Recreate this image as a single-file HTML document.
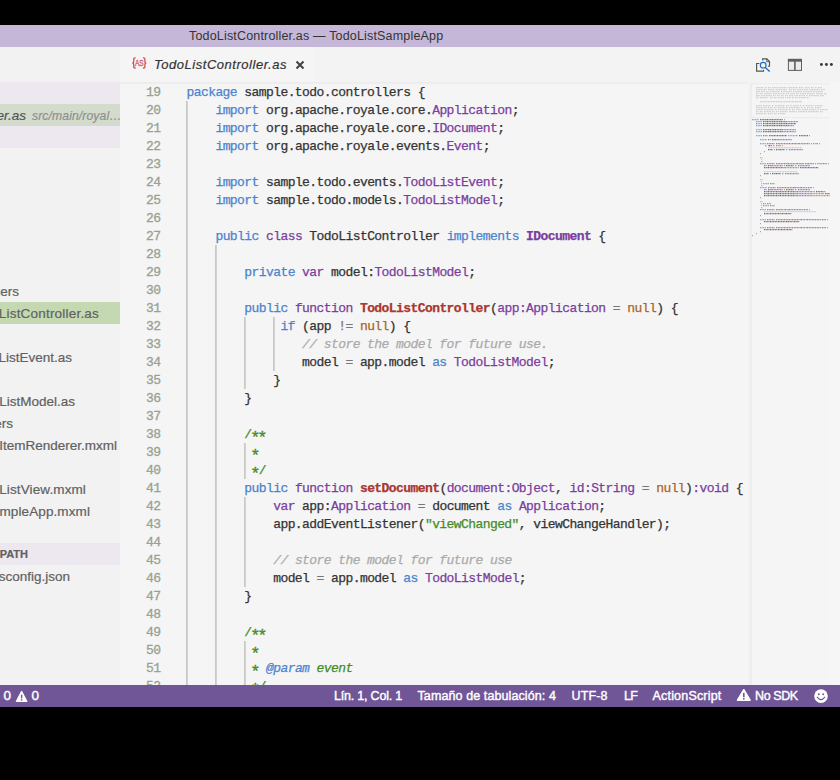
<!DOCTYPE html>
<html>
<head>
<meta charset="utf-8">
<title>TodoListController.as — TodoListSampleApp</title>
<style>
html,body{margin:0;padding:0;}
body{width:840px;height:780px;background:#000;position:relative;overflow:hidden;font-family:"Liberation Sans",sans-serif;}
#win{position:absolute;left:0;top:25px;width:840px;height:682px;background:#f5f5f5;overflow:hidden;}
#title{position:absolute;left:0;top:0;width:840px;height:22px;background:#c4b7d7;}
#title span{position:absolute;left:189px;top:0;line-height:22px;font-size:12.5px;color:#333;white-space:nowrap;letter-spacing:0.175px;}
#side{position:absolute;left:0;top:22px;width:120px;height:638px;background:#f2f2f2;overflow:hidden;}
.sh{position:absolute;left:0;width:120px;height:22px;background:#ede8ef;}
.row{position:absolute;left:0;width:120px;height:22px;}
.t{position:absolute;top:1px;line-height:22px;font-size:13.5px;color:#616161;white-space:nowrap;-webkit-text-stroke:0.2px;}
#tabs{position:absolute;left:120px;top:22px;width:720px;height:35px;background:#f3f3f3;}
#tab{position:absolute;left:0;top:0;width:194px;height:35px;background:#f5f5f5;}
#tab .nm{position:absolute;left:34px;top:0;line-height:35px;font-size:13px;font-style:italic;color:#333;white-space:nowrap;letter-spacing:0.53px;-webkit-text-stroke:0.2px;}
#ed{position:absolute;left:120px;top:57px;width:720px;height:603px;background:#f5f5f5;overflow:hidden;}
.ln{position:absolute;left:0;width:40.5px;text-align:right;font-family:"Liberation Mono",monospace;font-size:13px;letter-spacing:-0.577px;line-height:18px;height:18px;color:#98a194;-webkit-text-stroke:0.3px #98a194;}
.cl{position:absolute;left:66.5px;font-family:"Liberation Mono",monospace;font-size:13px;line-height:18px;height:18px;color:#333;white-space:pre;letter-spacing:-0.577px;-webkit-text-stroke:0.25px;}
.k{color:#4b83cd;}
.s{color:#7a3e9d;}
.ty{color:#7a3e9d;}
.tb{color:#7a3e9d;font-weight:bold;}
.fn{color:#aa3731;font-weight:bold;}
.c{color:#ab6526;}
.o{color:#777;}
.cm{color:#aaa;font-style:italic;}
.dc{color:#448c27;}
.dci{color:#448c27;font-style:italic;}
.dk{color:#4b83cd;font-style:italic;}
.st{color:#448c27;}
.a{display:inline-block;font-style:normal;transform:translate(-0.6px,3.6px) scale(1.3);}
.g{position:absolute;width:2px;background:linear-gradient(90deg,#c9c9c9 0,#c9c9c9 1px,#d2d2d2 1px,#d2d2d2 2px);}
#status{position:absolute;left:0;top:660px;width:840px;height:22px;background:#705697;color:#fff;font-size:12.5px;-webkit-text-stroke:0.4px #fff;}
#status span{position:absolute;top:0;line-height:22px;white-space:nowrap;}
</style>
</head>
<body>
<div id="win">
  <div id="title"><span>TodoListController.as — TodoListSampleApp</span></div>

  <div id="side">
    <div class="sh" style="top:35px"></div>
    <div class="row" style="top:57px;background:#d3dbcd">
      <span class="t" style="right:94px;font-style:italic;color:#555">er.as</span>
      <span class="t" style="left:32px;font-style:italic;font-size:12.2px;letter-spacing:0.1px;color:#8f8f8f">src/main/royal…</span>
    </div>
    <div class="sh" style="top:79px"></div>
    <div class="row" style="top:233px"><span class="t" style="right:101px">llers</span></div>
    <div class="row" style="top:255px;background:#c4d9b1"><span class="t" style="right:21px;letter-spacing:0.2px">ListController.as</span></div>
    <div class="row" style="top:299px"><span class="t" style="right:48px">ListEvent.as</span></div>
    <div class="row" style="top:343px"><span class="t" style="right:45px">ListModel.as</span></div>
    <div class="row" style="top:365px"><span class="t" style="right:107px">ers</span></div>
    <div class="row" style="top:387px"><span class="t" style="right:3px">ItemRenderer.mxml</span></div>
    <div class="row" style="top:431px"><span class="t" style="right:34px;letter-spacing:0.12px">ListView.mxml</span></div>
    <div class="row" style="top:453px"><span class="t" style="right:30px;letter-spacing:0.1px">ampleApp.mxml</span></div>
    <div class="sh" style="top:496px"><span class="t" style="right:92px;top:0;font-size:11px;font-weight:bold">PATH</span></div>
    <div class="row" style="top:518px"><span class="t" style="right:50px">sconfig.json</span></div>
  </div>

  <div id="tabs">
    <div id="tab">
      <svg style="position:absolute;left:10px;top:8px" width="18" height="16" viewBox="0 0 18 16">
        <path d="M5.7 2.9L4.8 2.9Q3.7 2.9 3.7 4L3.7 6.7Q3.7 7.95 2.3 7.95Q3.7 7.95 3.7 9.2L3.7 11.9Q3.7 13 4.8 13L5.7 13" fill="none" stroke="#d4545a" stroke-width="1.35"/>
        <path d="M12.9 2.9L13.8 2.9Q14.9 2.9 14.9 4L14.9 6.7Q14.9 7.95 16.3 7.95Q14.9 7.95 14.9 9.2L14.9 11.9Q14.9 13 13.8 13L12.9 13" fill="none" stroke="#d4545a" stroke-width="1.35"/>
        <text x="4.9" y="10.8" font-family="Liberation Sans" font-size="8.4" fill="#d4545a" stroke="#d4545a" stroke-width="0.3" textLength="8.8" lengthAdjust="spacingAndGlyphs">AS</text>
      </svg>
      <span class="nm">TodoListController.as</span>
      <svg style="position:absolute;left:174.5px;top:13px" width="10" height="10" viewBox="0 0 10 10"><path d="M1.5 1.5L8.5 8.5M8.5 1.5L1.5 8.5" stroke="#424242" stroke-width="2"/></svg>
    </div>
  </div>

  <!--icons-->
    <svg style="position:absolute;left:750px;top:22px" width="90" height="35" viewBox="750 47 90 35">
      <g fill="none" stroke="#555" stroke-width="1.15">
        <path d="M762.7 60.4L762.7 58.9L766.9 58.9L769.5 61.5L769.5 66.2L767.9 66.2"/>
        <path d="M766.7 58.9L766.7 61.7L769.5 61.7" stroke-width="0.9"/>
        <path d="M759.4 63.5L756.6 63.5L756.6 71.1L763.5 71.1L763.5 69.8"/>
      </g>
      <circle cx="763.2" cy="65.2" r="2.85" fill="none" stroke="#1a6dc0" stroke-width="1.15"/>
      <path d="M765.3 67.4L769.7 71.4" stroke="#1a6dc0" stroke-width="1.35" fill="none"/>
      <rect x="788.4" y="59.4" width="13.1" height="11" fill="#ececec" stroke="#606060" stroke-width="1"/>
      <rect x="787.9" y="58.9" width="14.1" height="2.8" fill="#606060"/>
      <rect x="794.1" y="59" width="1.6" height="11.5" fill="#606060"/>
      <circle cx="821.4" cy="64.5" r="1.45" fill="#3a3a3a"/>
      <circle cx="826.4" cy="64.5" r="1.45" fill="#3a3a3a"/>
      <circle cx="831.4" cy="64.5" r="1.45" fill="#3a3a3a"/>
    </svg>
  <div id="ed">
    <div style="position:absolute;left:0;top:0;width:632px;height:3px;background:linear-gradient(#eaeaea,#f5f5f5)"></div>
    <div style="position:absolute;left:628px;top:0;width:4px;height:603px;background:linear-gradient(90deg,#f5f5f5,#ebebeb)"></div>
    <div style="position:absolute;left:710px;top:0;width:10px;height:603px;background:#f6f6f6"></div>
    <svg style="position:absolute;left:632px;top:1px" width="88" height="603" viewBox="0 0 88 603"><g fill="none" stroke-width="1.1" stroke-dasharray="1.1 0.5"><path d="M0 0.6h78M0 34.6h78" stroke="#aaaaaa" opacity="0.16"/><path d="M4 4.6h8M13 4.6h2M16 4.6h3M20 4.6h6M27 4.6h8M36 4.6h10M47 4.6h5M53 4.6h5M59 4.6h3M63 4.6h2M66 4.6h4M4 6.6h11M16 6.6h7M24 6.6h11M37 6.6h3M41 6.6h3M45 6.6h6M52 6.6h4M57 6.6h11M69 6.6h4M4 8.6h4M9 8.6h4M14 8.6h3M18 8.6h10M29 8.6h11M41 8.6h9M51 8.6h9M61 8.6h10M4 10.6h3M8 10.6h3M12 10.6h8M21 10.6h4M26 10.6h4M31 10.6h2M34 10.6h3M38 10.6h5M44 10.6h3M48 10.6h6M55 10.6h8M64 10.6h7M72 10.6h3M4 12.6h4M9 12.6h11M21 12.6h3M25 12.6h3M29 12.6h3M33 12.6h3M37 12.6h4M42 12.6h4M47 12.6h6M54 12.6h2M57 12.6h10M68 12.6h4M4 14.6h3M8 14.6h8M18 14.6h3M22 14.6h3M26 14.6h6M33 14.6h1M35 14.6h4M40 14.6h2M43 14.6h3M47 14.6h7M55 14.6h2M8 18.6h42M4 22.6h6M11 22.6h8M20 22.6h2M23 22.6h10M34 22.6h3M38 22.6h2M41 22.6h6M48 22.6h2M51 22.6h2M54 22.6h8M63 22.6h8M4 24.6h11M16 24.6h5M22 24.6h3M26 24.6h7M34 24.6h2M37 24.6h11M49 24.6h2M52 24.6h2M55 24.6h3M59 24.6h3M63 24.6h6M4 26.6h7M12 26.6h10M23 26.6h2M26 26.6h10M37 26.6h2M40 26.6h3M44 26.6h5M50 26.6h6M57 26.6h7M65 26.6h2M68 26.6h8M4 28.6h3M8 28.6h3M12 28.6h7M20 28.6h3M24 28.6h3M28 28.6h8M37 28.6h8M46 28.6h9M56 28.6h11M68 28.6h3M4 30.6h11M16 30.6h5M22 30.6h3M26 30.6h8M16 64.6h34M12 88.6h33M12 128.6h52" stroke="#aaaaaa" opacity="0.55"/><path d="M0 36.6h7M4 38.6h6M4 40.6h6M4 42.6h6M4 46.6h6M4 48.6h6M4 52.6h6M36 52.6h10M8 56.6h7M8 60.6h6M13 62.6h2M34 66.6h2M8 80.6h6M43 82.6h2M30 90.6h2M11 100.6h6M8 104.6h7M43 106.6h2M11 122.6h6M8 126.6h6M8 136.6h6M8 144.6h6" stroke="#4b83cd" opacity="0.68"/><path d="M8 36.6h6M15 36.6h4M20 36.6h11M11 38.6h3M15 38.6h6M22 38.6h6M29 38.6h4M11 40.6h3M15 40.6h6M22 40.6h6M29 40.6h4M34 40.6h9M11 42.6h3M15 42.6h6M22 42.6h6M29 42.6h6M11 46.6h6M18 46.6h4M23 46.6h6M11 48.6h6M18 48.6h4M23 48.6h6M17 52.6h18M47 52.6h9M20 56.6h5M17 62.6h3M16 66.6h5M24 66.6h3M28 66.6h5M16 82.6h3M34 82.6h8M12 84.6h3M16 84.6h16M48 84.6h17M12 90.6h5M20 90.6h3M24 90.6h5M16 106.6h3M34 106.6h8M12 108.6h3M16 108.6h11M28 108.6h16M64 108.6h8M12 110.6h3M16 110.6h11M28 110.6h16M73 110.6h5M12 112.6h3M16 112.6h11M28 112.6h16M12 130.6h5M18 130.6h11M30 130.6h3M34 130.6h4M12 138.6h5M18 138.6h17M36 138.6h5M42 138.6h4M12 146.6h5M18 146.6h10M29 146.6h5M35 146.6h4" stroke="#333333" opacity="0.68"/><path d="M14 36.6h1M19 36.6h1M32 36.6h1M14 38.6h1M21 38.6h1M28 38.6h1M33 38.6h1M45 38.6h1M14 40.6h1M21 40.6h1M28 40.6h1M33 40.6h1M43 40.6h1M14 42.6h1M21 42.6h1M28 42.6h1M35 42.6h1M41 42.6h1M17 46.6h1M22 46.6h1M29 46.6h1M43 46.6h1M17 48.6h1M22 48.6h1M29 48.6h1M43 48.6h1M57 52.6h1M25 56.6h1M39 56.6h1M42 60.6h1M46 60.6h1M65 60.6h1M67 60.6h1M16 62.6h1M28 62.6h1M30 62.6h1M27 66.6h1M50 66.6h1M12 68.6h1M8 70.6h1M35 80.6h1M44 80.6h1M51 80.6h1M55 80.6h1M69 80.6h2M76 80.6h1M19 82.6h1M57 82.6h1M15 84.6h1M32 84.6h1M46 84.6h1M65 84.6h2M23 90.6h1M46 90.6h1M8 92.6h1M42 104.6h1M48 104.6h1M54 104.6h2M61 104.6h1M19 106.6h1M57 106.6h1M15 108.6h1M27 108.6h1M44 108.6h1M58 108.6h1M62 108.6h1M72 108.6h2M15 110.6h1M27 110.6h1M44 110.6h1M58 110.6h1M71 110.6h1M15 112.6h1M27 112.6h1M44 112.6h1M58 112.6h1M8 114.6h1M32 126.6h1M36 126.6h1M50 126.6h2M57 126.6h1M17 130.6h1M29 130.6h1M33 130.6h1M38 130.6h2M8 132.6h1M48 136.6h1M54 136.6h1M68 136.6h2M75 136.6h1M17 138.6h1M35 138.6h1M41 138.6h1M46 138.6h2M8 140.6h1M48 144.6h1M54 144.6h1M68 144.6h2M75 144.6h1M17 146.6h1M28 146.6h1M34 146.6h1M39 146.6h2M8 148.6h1M4 150.6h1M0 152.6h1" stroke="#333333" opacity="0.4"/><path d="M34 38.6h11M36 42.6h5M30 46.6h13M30 48.6h13M11 52.6h5M16 56.6h3M26 56.6h13M15 60.6h8M43 60.6h3M47 60.6h11M37 66.6h13M15 80.6h8M36 80.6h8M45 80.6h6M53 80.6h2M56 80.6h6M71 80.6h4M12 82.6h3M20 82.6h11M46 82.6h11M33 90.6h13M16 104.6h8M43 104.6h5M49 104.6h5M56 104.6h4M12 106.6h3M20 106.6h11M46 106.6h11M45 108.6h13M45 110.6h13M45 112.6h13M15 126.6h8M33 126.6h3M37 126.6h13M52 126.6h4M15 136.6h8M49 136.6h5M55 136.6h13M70 136.6h4M15 144.6h8M49 144.6h5M55 144.6h13M70 144.6h4" stroke="#7a3e9d" opacity="0.68"/><path d="M24 60.6h18M24 80.6h11M25 104.6h17M24 126.6h8M24 136.6h24M24 144.6h24" stroke="#aa3731" opacity="0.68"/><path d="M59 60.6h1M21 62.6h2M22 66.6h1M63 80.6h1M32 82.6h1M18 90.6h1M32 106.6h1" stroke="#777777" opacity="0.68"/><path d="M61 60.6h4M24 62.6h4M65 80.6h4M59 108.6h3M59 110.6h12M59 112.6h19" stroke="#ab6526" opacity="0.68"/><path d="M8 74.6h3M9 76.6h1M9 78.6h2M8 96.6h3M9 98.6h1M9 100.6h1M9 102.6h2M8 118.6h3M9 120.6h1M9 122.6h1M9 124.6h2" stroke="#448c27" opacity="0.4"/><path d="M33 84.6h13M18 100.6h5M11 120.6h3M15 120.6h4M18 122.6h5" stroke="#448c27" opacity="0.68"/></g></svg>
    <div class="ln" style="top:2px">19</div>
    <div class="cl" style="top:2px"><span class="k">package</span> sample.todo.controllers {</div>
    <div class="ln" style="top:20px">20</div>
    <div class="cl" style="top:20px">    <span class="k">import</span> org.apache.royale.core.<span class="ty">Application</span>;</div>
    <div class="ln" style="top:38px">21</div>
    <div class="cl" style="top:38px">    <span class="k">import</span> org.apache.royale.core.<span class="ty">IDocument</span>;</div>
    <div class="ln" style="top:56px">22</div>
    <div class="cl" style="top:56px">    <span class="k">import</span> org.apache.royale.events.<span class="ty">Event</span>;</div>
    <div class="ln" style="top:74px">23</div>
    <div class="ln" style="top:92px">24</div>
    <div class="cl" style="top:92px">    <span class="k">import</span> sample.todo.events.<span class="ty">TodoListEvent</span>;</div>
    <div class="ln" style="top:110px">25</div>
    <div class="cl" style="top:110px">    <span class="k">import</span> sample.todo.models.<span class="ty">TodoListModel</span>;</div>
    <div class="ln" style="top:128px">26</div>
    <div class="ln" style="top:146px">27</div>
    <div class="cl" style="top:146px">    <span class="k">public</span> <span class="s">class</span> TodoListController <span class="k">implements</span> <span class="tb">IDocument</span> {</div>
    <div class="ln" style="top:164px">28</div>
    <div class="ln" style="top:182px">29</div>
    <div class="cl" style="top:182px">        <span class="k">private</span> <span class="s">var</span> model:<span class="ty">TodoListModel</span>;</div>
    <div class="ln" style="top:200px">30</div>
    <div class="ln" style="top:218px">31</div>
    <div class="cl" style="top:218px">        <span class="k">public</span> <span class="s">function</span> <span class="fn">TodoListController</span>(<span class="ty">app:Application</span> <span class="o">=</span> <span class="c">null</span>) {</div>
    <div class="ln" style="top:236px">32</div>
    <div class="cl" style="top:236px">             <span class="k">if</span> (app <span class="o">!=</span> <span class="c">null</span>) {</div>
    <div class="ln" style="top:254px">33</div>
    <div class="cl" style="top:254px">                <span class="cm">// store the model for future use.</span></div>
    <div class="ln" style="top:272px">34</div>
    <div class="cl" style="top:272px">                model <span class="o">=</span> app.model <span class="k">as</span> <span class="ty">TodoListModel</span>;</div>
    <div class="ln" style="top:290px">35</div>
    <div class="cl" style="top:290px">            }</div>
    <div class="ln" style="top:308px">36</div>
    <div class="cl" style="top:308px">        }</div>
    <div class="ln" style="top:326px">37</div>
    <div class="ln" style="top:344px">38</div>
    <div class="cl" style="top:344px">        <span class="dc">/<i class="a">*</i><i class="a">*</i></span></div>
    <div class="ln" style="top:362px">39</div>
    <div class="cl" style="top:362px">         <span class="dc"><i class="a">*</i></span></div>
    <div class="ln" style="top:380px">40</div>
    <div class="cl" style="top:380px">         <span class="dc"><i class="a">*</i>/</span></div>
    <div class="ln" style="top:398px">41</div>
    <div class="cl" style="top:398px">        <span class="k">public</span> <span class="s">function</span> <span class="fn">setDocument</span>(<span class="ty">document:Object</span>, <span class="ty">id:String</span> <span class="o">=</span> <span class="c">null</span>)<span class="ty">:void</span> {</div>
    <div class="ln" style="top:416px">42</div>
    <div class="cl" style="top:416px">            <span class="s">var</span> app:<span class="ty">Application</span> <span class="o">=</span> document <span class="k">as</span> <span class="ty">Application</span>;</div>
    <div class="ln" style="top:434px">43</div>
    <div class="cl" style="top:434px">            app.addEventListener(<span class="st">&quot;viewChanged&quot;</span>, viewChangeHandler);</div>
    <div class="ln" style="top:452px">44</div>
    <div class="ln" style="top:470px">45</div>
    <div class="cl" style="top:470px">            <span class="cm">// store the model for future use</span></div>
    <div class="ln" style="top:488px">46</div>
    <div class="cl" style="top:488px">            model <span class="o">=</span> app.model <span class="k">as</span> <span class="ty">TodoListModel</span>;</div>
    <div class="ln" style="top:506px">47</div>
    <div class="cl" style="top:506px">        }</div>
    <div class="ln" style="top:524px">48</div>
    <div class="ln" style="top:542px">49</div>
    <div class="cl" style="top:542px">        <span class="dc">/<i class="a">*</i><i class="a">*</i></span></div>
    <div class="ln" style="top:560px">50</div>
    <div class="cl" style="top:560px">         <span class="dc"><i class="a">*</i></span></div>
    <div class="ln" style="top:578px">51</div>
    <div class="cl" style="top:578px">         <span class="dc"><i class="a">*</i> </span><span class="dk">@param</span><span class="dci"> event</span></div>
    <div class="ln" style="top:596px">52</div>
    <div class="cl" style="top:596px">         <span class="dc"><i class="a">*</i>/</span></div>
    <div class="g" style="left:66px;top:19px;height:594px"></div>
    <div class="g" style="left:95px;top:163px;height:450px"></div>
    <div class="g" style="left:124px;top:235px;height:72px"></div>
    <div class="g" style="left:124px;top:361px;height:36px"></div>
    <div class="g" style="left:124px;top:415px;height:90px"></div>
    <div class="g" style="left:124px;top:559px;height:54px"></div>
    <div class="g" style="left:153px;top:235px;height:54px"></div>
  </div>

  <div id="status">
    <span id="s1" style="left:3.4px;font-size:13.5px">0</span>
    <svg style="position:absolute;left:14px;top:3px" width="16" height="16" viewBox="0 0 16 16"><path d="M7.6 3.6L12.7 13.4L2.5 13.4Z" fill="#fff" stroke="#fff" stroke-width="1.4" stroke-linejoin="round"/><rect x="6.9" y="6.6" width="1.4" height="3.9" fill="#705697"/><rect x="6.9" y="11.3" width="1.4" height="1.4" fill="#705697"/></svg>
    <span id="s2" style="left:31.4px;font-size:13.5px">0</span>
    <span id="s3" style="letter-spacing:-0.2px;left:334px">Lín. 1, Col. 1</span>
    <span id="s4" style="letter-spacing:0.1px;left:417.5px">Tamaño de tabulación: 4</span>
    <span id="s5" style="letter-spacing:0.12px;left:571.5px">UTF-8</span>
    <span id="s6" style="letter-spacing:-0.7px;left:624px">LF</span>
    <span id="s7" style="letter-spacing:0.19px;left:652.5px">ActionScript</span>
    <svg style="position:absolute;left:735px;top:2px" width="18" height="16" viewBox="0 0 18 16"><path d="M8.8 2.7L15.1 13.2L2.5 13.2Z" fill="#fff" stroke="#fff" stroke-width="1.5" stroke-linejoin="round"/><rect x="8" y="5.9" width="1.6" height="4.3" fill="#705697"/><rect x="8" y="11.1" width="1.6" height="1.5" fill="#705697"/></svg>
    <span id="s8" style="letter-spacing:-0.4px;left:755px">No SDK</span>
    <svg style="position:absolute;left:813px;top:3px" width="16" height="16" viewBox="0 0 16 16"><circle cx="8" cy="8.1" r="6.8" fill="#fff"/><circle cx="5.8" cy="6.2" r="0.95" fill="#705697"/><circle cx="10.2" cy="6.2" r="0.95" fill="#705697"/><path d="M4.2 9.1Q8 14 11.8 9.1" fill="none" stroke="#705697" stroke-width="1.15" stroke-linecap="round"/></svg>
  </div>
</div>
</body>
</html>
